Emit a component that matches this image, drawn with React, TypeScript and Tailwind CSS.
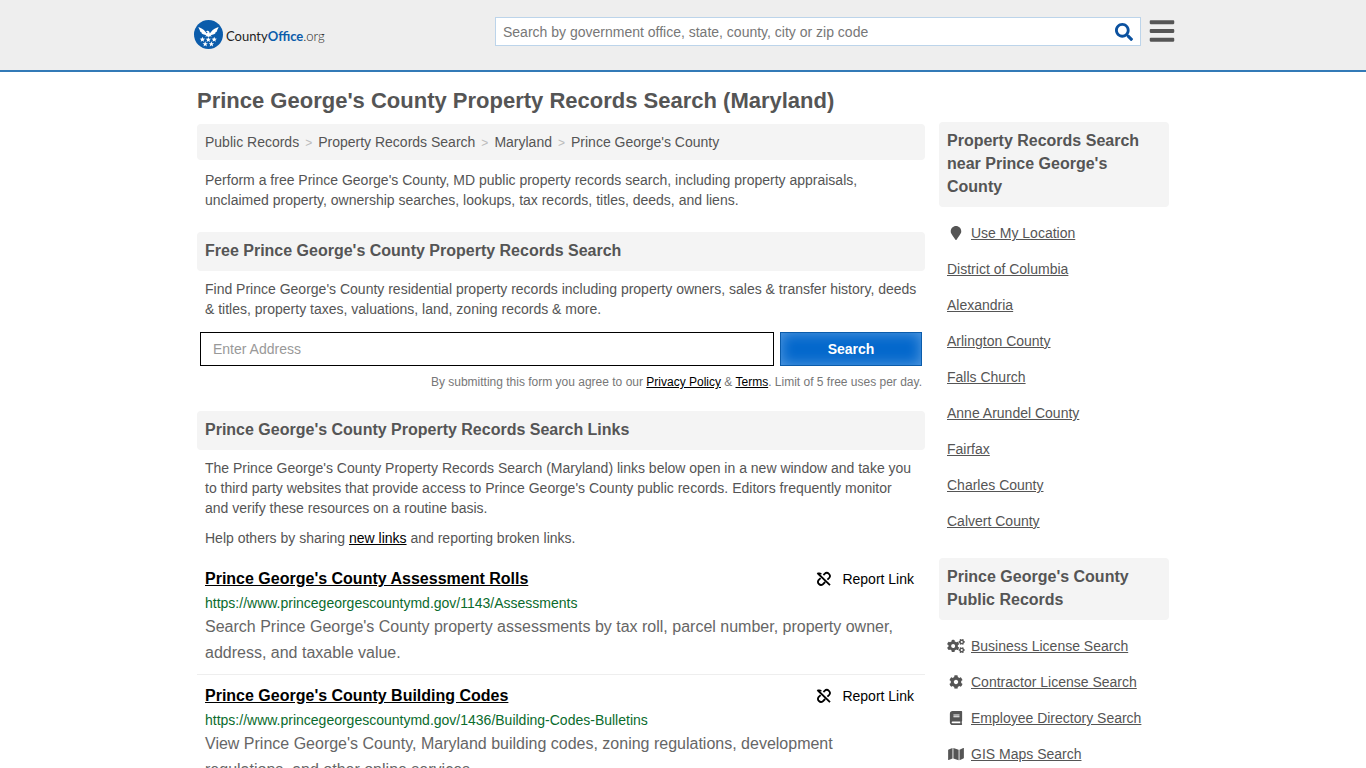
import React, { useState } from 'react';
import { FaBars, FaBook, FaCog, FaCogs, FaMap, FaMapMarker, FaSearch } from 'react-icons/fa';

const crumbs = ['Public Records', 'Property Records Search', 'Maryland', "Prince George's County"];

const resources = [
  {
    title: "Prince George's County Assessment Rolls",
    url: 'https://www.princegeorgescountymd.gov/1143/Assessments',
    description: "Search Prince George's County property assessments by tax roll, parcel number, property owner, address, and taxable value."
  },
  {
    title: "Prince George's County Building Codes",
    url: 'https://www.princegeorgescountymd.gov/1436/Building-Codes-Bulletins',
    description: "View Prince George's County, Maryland building codes, zoning regulations, development regulations, and other online services."
  }
];

const nearby = [
  { name: 'Use My Location', icon: FaMapMarker },
  { name: 'District of Columbia' },
  { name: 'Alexandria' },
  { name: 'Arlington County' },
  { name: 'Falls Church' },
  { name: 'Anne Arundel County' },
  { name: 'Fairfax' },
  { name: 'Charles County' },
  { name: 'Calvert County' }
];

const publicRecords = [
  { name: 'Business License Search', icon: FaCogs },
  { name: 'Contractor License Search', icon: FaCog },
  { name: 'Employee Directory Search', icon: FaBook },
  { name: 'GIS Maps Search', icon: FaMap }
];

const STAR = 'M0 -2.8 L0.75 -0.9 L2.7 -0.85 L1.15 0.4 L1.7 2.3 L0 1.2 L-1.7 2.3 L-1.15 0.4 L-2.7 -0.85 L-0.75 -0.9 Z';

const Logo: React.FC = () => (
  <a href="#home" className="flex items-center gap-[3px] font-['Lato',sans-serif] text-[13px] text-[#222]">
    <svg viewBox="0 0 29 29" className="h-[29px] w-[29px]" aria-hidden="true">
      <circle cx="14.5" cy="14.5" r="14.5" fill="#0b5cab" />
      <path
        fill="#fff"
        d="M4.4 7 C6.4 7.8 9.8 9.2 11.4 11.8 L12.8 13.4 L13.5 12.3 L11.8 11.2 C12.6 10.4 14.8 10.4 15.3 11.8 L15.8 13.4 L17.2 11.8 C18.8 9.2 22.2 7.8 24.6 7 C24.2 8.6 23.6 9.7 22.8 10.4 L23.4 10.5 C22.8 11.7 22 12.4 21.2 12.6 L21.6 13.1 C20.6 14.2 19.4 14.7 18.2 14.7 L16.6 15.3 L18 16.4 L16 16.2 L14.5 16.9 L13 16.2 L11 16.4 L12.4 15.3 L10.8 14.7 C9.6 14.7 8.4 14.2 7.4 13.1 L7.8 12.6 C7 12.4 6.2 11.7 5.6 10.5 L6.2 10.4 C5.4 9.7 4.8 8.6 4.4 7 Z"
      />
      {[[8.4, 19.5], [14.3, 19.7], [20.2, 19.5], [11.2, 24.1], [17.4, 24.1]].map(([x, y]) => (
        <path key={`${x}-${y}`} d={STAR} fill="#fff" transform={`translate(${x} ${y})`} />
      ))}
    </svg>
    <span className="pt-0.5">
      County<b className="text-[#0b5cab]">Office</b><span className="font-light">.org</span>
    </span>
  </a>
);

const UnlinkIcon: React.FC = () => (
  <svg viewBox="0 0 16 16" className="h-4 w-4" fill="none" stroke="currentColor" strokeWidth="1.8" aria-hidden="true">
    <path d="M2.4 2 L15 14.2" />
    <path d="M8.4 4 L9.6 2.9 A3 3 0 0 1 14 7.1 L12.4 8.7" />
    <path d="M5.6 7.2 L3.6 9.1 A3 3 0 0 0 7.9 13.2 L10.2 11" />
    <path d="M2.8 2.6 C4 2 5.4 2.2 6.4 3.2" strokeWidth="1.4" />
  </svg>
);

const SectionHeading: React.FC<{ children: React.ReactNode }> = ({ children }) => (
  <h2 className="rounded-sm bg-[#f4f4f4] px-2 pt-[7px] pb-2 text-base leading-6 font-bold">{children}</h2>
);

const SideList: React.FC<{ title: string; items: { name: string; icon?: React.ElementType }[] }> = ({ title, items }) => (
  <section>
    <h2 className="rounded-sm bg-[#f4f4f4] px-2 pt-[7px] pb-[9px] text-base leading-[23px] font-bold">{title}</h2>
    <ul className="mt-2 px-2">
      {items.map((item) => (
        <li key={item.name} className="flex h-9 items-center">
          {item.icon && (
            <span className="mr-1.5 flex w-[18px] justify-center">
              <item.icon className="h-3.5 w-[18px]" />
            </span>
          )}
          <a href="#records" className="underline">{item.name}</a>
        </li>
      ))}
    </ul>
  </section>
);

const App: React.FC = () => {
  const [query, setQuery] = useState('');
  const [address, setAddress] = useState('');

  return (
    <div className="min-h-screen bg-white font-['Liberation_Sans',Arial,sans-serif] text-sm leading-5 text-[#555]">
      <header className="border-b-2 border-[#337ab7] bg-[#eee]">
        <div className="mx-auto flex h-[70px] max-w-[984px] items-start justify-between pl-[3px]">
          <div className="pt-5">
            <Logo />
          </div>
          <div className="flex items-start gap-2 pt-[17px]">
            <form className="flex h-[29px] w-[646px] items-center border border-[#bcd4ea] bg-white" onSubmit={(e) => e.preventDefault()}>
              <input
                type="text"
                aria-label="Search by government office, state, county, city or zip code"
                placeholder="Search by government office, state, county, city or zip code"
                value={query}
                onChange={(e) => setQuery(e.target.value)}
                className="min-w-0 flex-1 px-[7px] outline-none placeholder:text-[#777]"
              />
              <button type="submit" aria-label="Search" className="px-[7px] text-[#0b519f]">
                <FaSearch className="h-[18px] w-[18px]" />
              </button>
            </form>
            <button type="button" aria-label="Menu">
              <FaBars className="h-7 w-[26px]" />
            </button>
          </div>
        </div>
      </header>

      <div className="mx-auto max-w-[972px]">
        <h1 className="pt-3.5 text-[22px] leading-[30px] font-bold">Prince George's County Property Records Search (Maryland)</h1>
        <div className="flex items-start gap-3.5 pt-1.5">
          <main className="min-w-0 flex-1 pt-0.5">
            <nav aria-label="Breadcrumb" className="rounded-sm bg-[#f4f4f4] p-2">
              <ol className="flex">
                {crumbs.map((crumb, index) => (
                  <li key={crumb}>
                    {index > 0 && <span className="px-1.5 text-xs text-[#bbb]">&gt;</span>}
                    <a href="#crumb">{crumb}</a>
                  </li>
                ))}
              </ol>
            </nav>
            <p className="px-2 pt-2.5 pb-[22px]">
              Perform a free Prince George's County, MD public property records search, including property appraisals, unclaimed property, ownership searches, lookups, tax records, titles, deeds, and liens.
            </p>

            <SectionHeading>Free Prince George's County Property Records Search</SectionHeading>
            <p className="px-2 pt-2">
              Find Prince George's County residential property records including property owners, sales &amp; transfer history, deeds &amp; titles, property taxes, valuations, land, zoning records &amp; more.
            </p>
            <form className="flex gap-1.5 px-[3px] pt-[13px]" onSubmit={(e) => e.preventDefault()}>
              <input
                type="text"
                aria-label="Enter Address"
                placeholder="Enter Address"
                value={address}
                onChange={(e) => setAddress(e.target.value)}
                className="h-[34px] min-w-0 flex-1 border border-black px-3 outline-none placeholder:text-[#999]"
              />
              <button type="submit" className="h-[34px] w-[142px] border border-[#0b5cab] bg-[#0468cc] font-bold text-white shadow-[inset_0_0_14px_#5a9de0]">
                Search
              </button>
            </form>
            <p className="px-[3px] pt-1.5 pb-[19px] text-right text-xs leading-5 text-[#777]">
              By submitting this form you agree to our <a href="#privacy" className="text-black underline">Privacy Policy</a> &amp;{' '}
              <a href="#terms" className="text-black underline">Terms</a>. Limit of 5 free uses per day.
            </p>

            <SectionHeading>Prince George's County Property Records Search Links</SectionHeading>
            <p className="px-2 pt-2">
              The Prince George's County Property Records Search (Maryland) links below open in a new window and take you to third party websites that provide access to Prince George's County public records. Editors frequently monitor and verify these resources on a routine basis.
            </p>
            <p className="px-2 pt-2.5">
              Help others by sharing <a href="#new" className="text-black underline">new links</a> and reporting broken links.
            </p>

            <ul className="pt-2.5">
              {resources.map((item) => (
                <li key={item.url} className="border-b border-[#eee] p-2">
                  <div className="flex items-center justify-between text-black">
                    <a href="#resource" className="text-base leading-[26px] font-bold underline">{item.title}</a>
                    <button type="button" className="flex items-center gap-[11px] pr-[3px]">
                      <UnlinkIcon />
                      Report Link
                    </button>
                  </div>
                  <div className="leading-[22px] text-[#0a6b2d]">{item.url}</div>
                  <p className="text-base leading-[26px] text-[#666]">{item.description}</p>
                </li>
              ))}
            </ul>
          </main>

          <aside className="flex w-[230px] flex-col gap-[19px]">
            <SideList title="Property Records Search near Prince George's County" items={nearby} />
            <SideList title="Prince George's County Public Records" items={publicRecords} />
          </aside>
        </div>
      </div>
    </div>
  );
};

export default App;
